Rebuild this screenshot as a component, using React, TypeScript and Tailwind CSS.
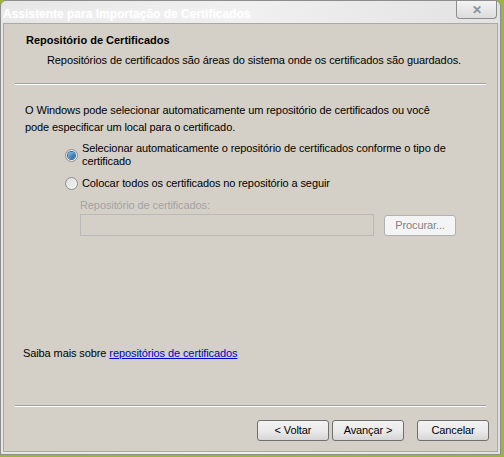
import { useState } from 'react';

const font = { fontFamily: '"Liberation Sans", Arial, sans-serif' };

function Radio({ checked }: { checked: boolean }) {
  return (
    <span className="relative inline-block h-[13px] w-[13px] shrink-0 rounded-full border border-[#8f8f8f] bg-gradient-to-br from-[#dcdcdc] to-[#f8f8f8]">
      {checked && (
        <span className="absolute left-[2px] top-[2px] h-[7px] w-[7px] rounded-full bg-gradient-to-br from-[#7ec4ef] to-[#1c5a94] ring-1 ring-[#2a6fa8]" />
      )}
    </span>
  );
}

function Button({ children, disabled }: { children: React.ReactNode; disabled?: boolean }) {
  return (
    <button
      className={
        'h-[21px] w-[72px] rounded-[3px] border text-[11px] leading-none ' +
        (disabled
          ? 'border-[#adb2b5] bg-[#f4f4f4] text-[#838383]'
          : 'border-[#707070] bg-gradient-to-b from-[#f2f2f2] via-[#ebebeb] to-[#d6d6d6] text-black')
      }
    >
      {children}
    </button>
  );
}

export default function App() {
  const [auto] = useState(true);

  return (
    <div className="h-[457px] w-[504px] overflow-hidden bg-[#9fb43a]" style={font}>
      <div className="flex h-[455px] w-[501px] flex-col rounded-t-[6px] border border-[#8d8d8d] bg-gradient-to-r from-[#e6e6e6] via-[#f0f0f0] to-[#e2e2e2]">
        {/* title bar */}
        <div className="flex h-[22px] items-start justify-between pl-[2px] pr-[3px]">
          <span className="mt-[4px] text-[12px] font-bold text-white [text-shadow:0_0_6px_rgba(255,255,255,0.9)]">
            Assistente para Importação de Certificados
          </span>
          <span className="flex h-[18px] w-[41px] items-center justify-center rounded-b-[4px] border border-t-0 border-[#8d8d8d] bg-gradient-to-b from-[#f4f4f4] to-[#dcdcdc] text-[12px] font-bold leading-none text-[#8b9097]">
            ✕
          </span>
        </div>

        {/* client area */}
        <div className="mx-[2px] mb-[2px] flex flex-1 flex-col whitespace-nowrap border border-[#a9a9a9] bg-[#d4d0c8] text-[11px] tracking-[-0.1px] text-black">
          <div className="px-[22px] pt-[8px]">
            <div className="font-bold tracking-normal">Repositório de Certificados</div>
            <div className="mt-[3px] pl-[21px]">Repositórios de certificados são áreas do sistema onde os certificados são guardados.</div>
          </div>
          <div className="mx-[11px] mt-[15px] border-t border-b border-t-[#a0a0a0] border-b-white" />

          <div className="px-[21px] pt-[17px] leading-[17px]">
            <p>
              O Windows pode selecionar automaticamente um repositório de certificados ou você
              <br />
              pode especificar um local para o certificado.
            </p>

            <div className="mt-[6px] pl-[40px]">
              <label className="flex items-center gap-[4px] leading-[13px]">
                <Radio checked={auto} />
                <span>
                  Selecionar automaticamente o repositório de certificados conforme o tipo de
                  <br />
                  certificado
                </span>
              </label>
              <label className="mt-[9px] flex items-center gap-[4px] leading-[13px]">
                <Radio checked={!auto} />
                <span>Colocar todos os certificados no repositório a seguir</span>
              </label>

              <div className="mt-[7px] pl-[15px] text-[#a3a3a3]">Repositório de certificados:</div>
              <div className="flex items-center gap-[10px] pl-[15px]">
                <div className="h-[22px] w-[294px] border border-[#b9b9b9] bg-[#d4d0c8]" />
                <Button disabled>Procurar...</Button>
              </div>
            </div>
          </div>

          <div className="flex-1" />

          <div className="px-[19px] pb-[44px]">
            Saiba mais sobre{' '}
            <a className="text-[#0000cc] underline">repositórios de certificados</a>
          </div>

          <div className="mx-[11px] border-t border-b border-t-[#a0a0a0] border-b-white" />

          <div className="flex justify-end gap-[3px] pb-[10px] pr-[8px] pt-[13px]">
            <Button>&lt; Voltar</Button>
            <Button>Avançar &gt;</Button>
            <span className="w-[7px]" />
            <Button>Cancelar</Button>
          </div>
        </div>
      </div>
    </div>
  );
}
